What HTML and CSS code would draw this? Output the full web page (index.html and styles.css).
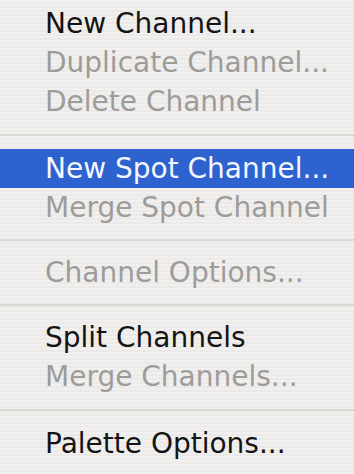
FILE: index.html
```html
<!DOCTYPE html>
<html lang="en">
<head>
    <meta charset="UTF-8">
    <meta name="viewport" content="width=device-width, initial-scale=1.0">
    <title>Channels Menu</title>
    <link rel="stylesheet" href="styles.css">
</head>
<body>
    <ul class="menu">
        <li class="item">New Channel...</li>
        <li class="item disabled">Duplicate Channel...</li>
        <li class="item disabled">Delete Channel</li>
        <li class="sep wide"></li>
        <li class="item active">New Spot Channel...</li>
        <li class="item disabled">Merge Spot Channel</li>
        <li class="sep"></li>
        <li class="item disabled">Channel Options...</li>
        <li class="sep"></li>
        <li class="item">Split Channels</li>
        <li class="item disabled">Merge Channels...</li>
        <li class="sep wide"></li>
        <li class="item">Palette Options...</li>
    </ul>
</body>
</html>
```

FILE: styles.css
```css
html, body {
    margin: 0;
    height: 100%;
}
body {
    background-color: #efeeec;
    background-image: repeating-linear-gradient(to bottom, #f1f0ee 0, #f1f0ee 2px, #ebeae8 2px, #ebeae8 4px);
    font-family: "DejaVu Sans", "Noto Sans", sans-serif;
    overflow: hidden;
}
.menu {
    list-style: none;
    margin: 0;
    padding: 4px 0 0;
}
.item {
    height: 39px;
    line-height: 39px;
    padding-left: 45px;
    font-size: 28px;
    color: #141414;
    white-space: nowrap;
}
.item.disabled {
    color: #9d9c9a;
}
.item.active {
    background-color: #2d62cf;
    color: #f4f7ff;
}
.sep {
    box-sizing: border-box;
    height: 26px;
    padding-top: 12px;
}
.sep.wide {
    height: 28px;
    padding-top: 13px;
}
.sep::after {
    content: "";
    display: block;
    height: 2px;
    background-color: #d9d8d5;
}
```
